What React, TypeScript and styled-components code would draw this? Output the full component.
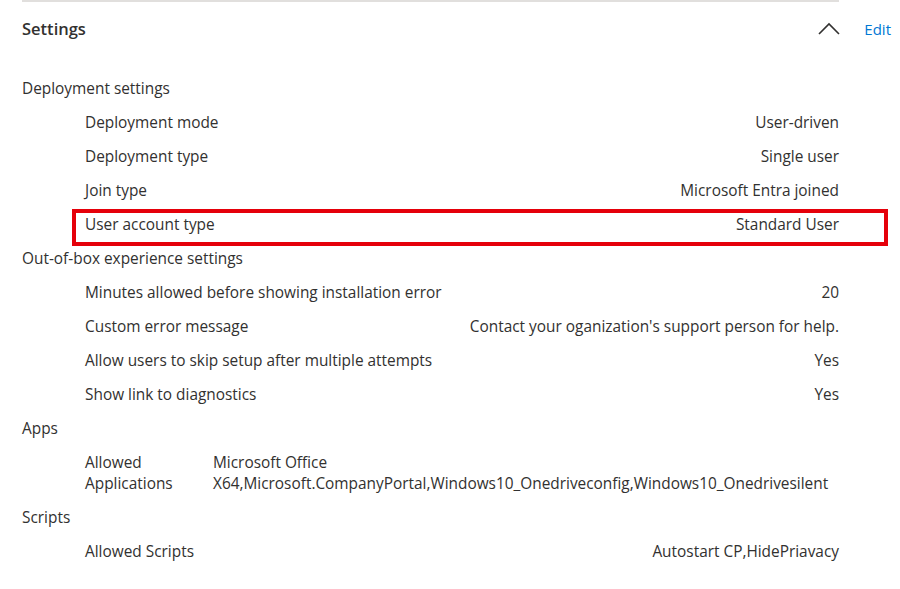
import styled, { createGlobalStyle } from 'styled-components';

const colors = {
  text: '#323130',
  line: '#e1dfdd',
  link: '#0078d4',
  highlight: '#e5000a',
};

const GlobalStyle = createGlobalStyle`
  html, body {
    margin: 0;
    padding: 0;
    background: #ffffff;
  }
  body {
    font-family: 'Open Sans', 'Noto Sans', sans-serif;
    font-size: 15.4px;
    color: ${colors.text};
  }
`;

type Item = {
  label: string;
  value: string;
  highlighted?: boolean;
};

type Section = {
  title: string;
  items: Item[];
};

const sections: Section[] = [
  {
    title: 'Deployment settings',
    items: [
      { label: 'Deployment mode', value: 'User-driven' },
      { label: 'Deployment type', value: 'Single user' },
      { label: 'Join type', value: 'Microsoft Entra joined' },
      { label: 'User account type', value: 'Standard User', highlighted: true },
    ],
  },
  {
    title: 'Out-of-box experience settings',
    items: [
      { label: 'Minutes allowed before showing installation error', value: '20' },
      { label: 'Custom error message', value: "Contact your oganization's support person for help." },
      { label: 'Allow users to skip setup after multiple attempts', value: 'Yes' },
      { label: 'Show link to diagnostics', value: 'Yes' },
    ],
  },
];

const Panel = styled.section`
  margin-left: 22px;
  width: 817px;
  border-top: 2px solid ${colors.line};
`;

const Header = styled.header`
  display: flex;
  align-items: center;
  justify-content: space-between;
  height: 53px;
`;

const Title = styled.h2`
  margin: 0;
  font-size: 16.5px;
  font-weight: 600;
`;

const Actions = styled.div`
  display: flex;
  align-items: center;
  gap: 24px;
  margin-right: -52px;
`;

const Chevron = styled.button`
  display: flex;
  padding: 0;
  border: none;
  background: none;
  cursor: pointer;
`;

const EditLink = styled.a`
  color: ${colors.link};
  font-size: 15px;
  text-decoration: none;
  cursor: pointer;
`;

const Body = styled.div`
  padding-top: 17px;
`;

const SectionTitle = styled.div`
  height: 34px;
  line-height: 34px;
`;

const Row = styled.div<{ $highlighted?: boolean }>`
  position: relative;
  display: flex;
  justify-content: space-between;
  height: 34px;
  line-height: 34px;
  margin-left: 63px;

  ${props => props.$highlighted && `
    &::after {
      content: '';
      position: absolute;
      top: 1px;
      bottom: -4px;
      left: -13px;
      right: -49px;
      border: 4px solid ${colors.highlight};
      pointer-events: none;
    }
  `}
`;

const Value = styled.span`
  text-align: right;
`;

const StackedRow = styled.div`
  display: grid;
  grid-template-columns: 128px 1fr;
  margin-left: 63px;
  padding: 6px 0 7px;
  line-height: 21px;
`;

const ChevronUp = () => (
  <svg width="22" height="13" viewBox="0 0 22 13" fill="none">
    <polyline points="1,12 11,2 21,12" stroke={colors.text} strokeWidth="1.6" />
  </svg>
);

export default function App() {
  return (
    <>
      <GlobalStyle />
      <Panel>
        <Header>
          <Title>Settings</Title>
          <Actions>
            <Chevron aria-label="Collapse">
              <ChevronUp />
            </Chevron>
            <EditLink>Edit</EditLink>
          </Actions>
        </Header>
        <Body>
          {sections.map(section => (
            <div key={section.title}>
              <SectionTitle>{section.title}</SectionTitle>
              {section.items.map(item => (
                <Row key={item.label} $highlighted={item.highlighted}>
                  <span>{item.label}</span>
                  <Value>{item.value}</Value>
                </Row>
              ))}
            </div>
          ))}
          <SectionTitle>Apps</SectionTitle>
          <StackedRow>
            <span>Allowed<br />Applications</span>
            <span>
              Microsoft Office<br />
              X64,Microsoft.CompanyPortal,Windows10_Onedriveconfig,Windows10_Onedrivesilent
            </span>
          </StackedRow>
          <SectionTitle>Scripts</SectionTitle>
          <Row>
            <span>Allowed Scripts</span>
            <Value>Autostart CP,HidePriavacy</Value>
          </Row>
        </Body>
      </Panel>
    </>
  );
}
